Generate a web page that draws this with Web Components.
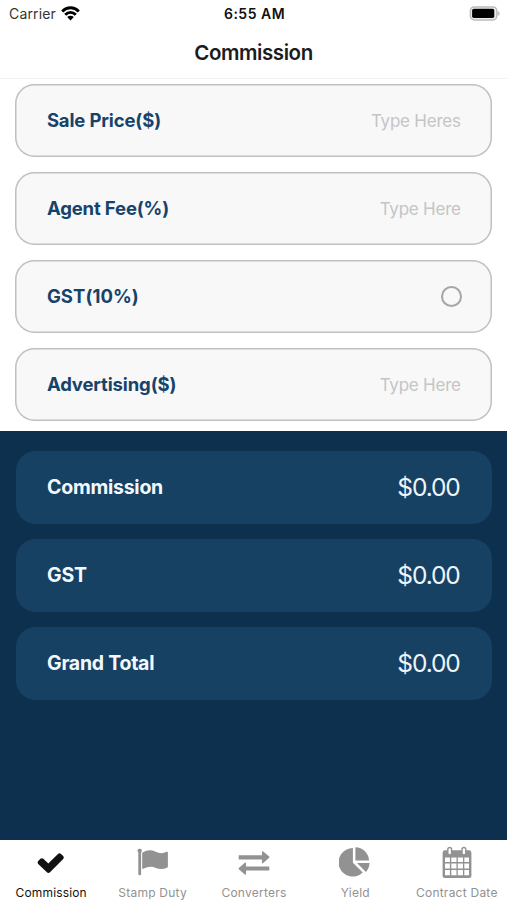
<!DOCTYPE html>
<html lang="en">
<head>
<meta charset="utf-8">
<title>Commission</title>
<style>
html,body{margin:0;height:100%;overflow:hidden;background:#fff}
body{font-family:Inter,"Liberation Sans",sans-serif}
</style>
</head>
<body>
<commission-app></commission-app>
<script>
const define = (name, html) => {
  const template = document.createElement('template');
  template.innerHTML = html;
  customElements.define(name, class extends HTMLElement {
    constructor() {
      super();
      this.attachShadow({mode: 'open'}).append(template.content.cloneNode(true));
    }
  });
};

define('status-bar', `<style>
:host{display:grid;grid-template-columns:1fr auto 1fr;align-items:center;height:27px;padding:0 7px 0 9px;color:#111}
.left{display:flex;align-items:center;gap:5.5px;font-size:14px;letter-spacing:.15px;color:#333}
.time{font-size:14px;font-weight:600;letter-spacing:.5px}
.battery{justify-self:end}
svg{display:block}
</style>
<div class="left"><span>Carrier</span><svg width="19" height="15" viewBox="0 0 19 15"><g fill="none" stroke="#000" stroke-width="2.9"><path d="M1.2 5.4C6 .5 13 .5 17.8 5.4"/><path d="M4.2 8.8C7.3 5.8 11.7 5.8 14.8 8.8"/></g><path d="M6.2 11.1c1.8-1.7 4.8-1.7 6.6 0L9.5 14.4z"/></svg></div>
<div class="time">6:55 AM</div>
<svg class="battery" width="31" height="15" viewBox="0 0 31 15"><rect x="1.4" y=".9" width="26.4" height="13" rx="3.8" fill="#eee" stroke="#bcbcbc" stroke-width="1.5"/><rect x="3.1" y="2.8" width="22.2" height="9.2" rx="1.8"/><path d="M28.6 5c1.6.5 2 1.3 2 2.4s-.4 1.9-2 2.4z" fill="#bcbcbc"/></svg>`);

define('nav-title', `<style>
:host{display:flex;align-items:center;justify-content:center;height:51px;border-bottom:1px solid #f3f3f3;font-size:20.5px;font-weight:600;color:#1c1c1e;letter-spacing:-.42px}
</style><slot></slot>`);

define('form-row', `<style>
:host{display:flex;align-items:center;justify-content:space-between;box-sizing:border-box;height:73px;padding:0 31px 1px 31.5px;border-radius:19.5px;background:#f8f8f8;box-shadow:inset 0 0 0 1.5px #c0c0c0;color:#17436a;font-size:18.5px;font-weight:700;letter-spacing:-.14px}
::slotted([slot=value]){font-size:17px;font-weight:400;color:#c5c5c7;letter-spacing:-.22px;padding:2px .6px 0 0}
</style><slot></slot><slot name="value"></slot>`);

define('radio-ring', `<style>
:host{display:block;box-sizing:border-box;width:21px;height:21px;border:2px solid #a5a5a5;border-radius:50%;margin:1px -1px 0 0}
</style>`);

define('result-row', `<style>
:host{display:flex;align-items:center;justify-content:space-between;box-sizing:border-box;height:73px;padding:0 31.5px;border-radius:19.5px;background:#174163;color:#f4f8fc;font-size:19.5px;font-weight:700;letter-spacing:-.25px}
::slotted([slot=value]){font-size:24.5px;font-weight:400;color:#edf5fc;letter-spacing:-1.1px;padding:0 .8px 1px 0}
</style><slot></slot><slot name="value"></slot>`);

define('tab-item', `<style>
:host{display:flex;flex-direction:column;align-items:center;color:#929292;font-size:12px;line-height:15px;white-space:nowrap;letter-spacing:.24px}
:host([active]){color:#111;letter-spacing:.15px}
.icon{height:32px;margin:6px 0 7px;padding-left:1px;display:block}
.label{padding-left:1px}
::slotted(svg){display:block;fill:currentColor}
</style><div class="icon"><slot name="icon"></slot></div><span class="label"><slot></slot></span>`);

define('tab-bar', `<style>
:host{display:grid;grid-template-columns:repeat(5,1fr);height:60px;background:#fff}
</style><slot></slot>`);

define('commission-app', `<style>
:host{display:flex;flex-direction:column;height:900px;width:507px}
.form{display:flex;flex-direction:column;gap:15px;padding:5px 14.6px 10px 15.4px}
.results{flex:1;display:flex;flex-direction:column;gap:15px;padding:19.5px 15px 0 15.5px;background:#0c304d}
</style>
<status-bar></status-bar>
<nav-title><span>Commission</span></nav-title>
<div class="form">
<form-row><span>Sale Price($)</span><span slot="value">Type Heres</span></form-row>
<form-row><span>Agent Fee(%)</span><span slot="value">Type Here</span></form-row>
<form-row><span style="letter-spacing:.05px">GST(10%)</span><radio-ring slot="value" style="padding:0"></radio-ring></form-row>
<form-row><span>Advertising($)</span><span slot="value">Type Here</span></form-row>
</div>
<div class="results">
<result-row><span>Commission</span><span slot="value">$0.00</span></result-row>
<result-row><span>GST</span><span slot="value">$0.00</span></result-row>
<result-row><span>Grand Total</span><span slot="value">$0.00</span></result-row>
</div>
<tab-bar>
<tab-item active><svg slot="icon" width="32" height="32" viewBox="0 0 32 32"><path d="M3.2 15l2.2-2.2q1.5-1.3 3 0l4.9 4.8 9.7-9.7q1.5-1.3 3 0l2.2 2.2q1.4 1.5 0 3L15 26.3q-1.6 1.4-3.1 0l-8.7-8.4q-1.4-1.5 0-2.9z"/></svg><span>Commission</span></tab-item>
<tab-item><svg slot="icon" width="32" height="32" viewBox="0 0 32 32"><path d="M2.7 2.8a2 2 0 0 1 1.4 3.6v21.8q0 1.1-1.4 1.1t-1.4-1.1V6.4a2 2 0 0 1 1.4-3.6z"/><path d="M5.2 6.7Q12 2.6 18.2 5.6t11.3.2q1.4-.5 1.4.7v14q0 .9-1 1.3-5.4 2.4-11.1.1Q13 19.4 6.2 22.8q-1 .5-1-.7z"/></svg><span>Stamp Duty</span></tab-item>
<tab-item><svg slot="icon" width="32" height="32" viewBox="0 0 32 32"><path d="M.7 9.2H24V5.7q.3-.9 1.2-.3l6 5.2q.5.6 0 1.2l-6 5.2q-1 .6-1.2-.3v-3.3H.7zM31.3 20.4H8v-3.3q-.3-.9-1.2-.3l-6 5.2q-.5.6 0 1.2l6 5.2q1 .6 1.2-.3v-3.5h23.3z"/></svg><span>Converters</span></tab-item>
<tab-item><svg slot="icon" width="32" height="32" viewBox="0 0 32 32"><path d="M13.9 2v14.7l9.9 9.9A14.3 14.3 0 1 1 13.9 2zM16.4 1.2A13.7 13.7 0 0 1 30 14.6H16.4zM18 17.1h12.6a13.7 13.7 0 0 1-3.7 8.9z"/></svg><span>Yield</span></tab-item>
<tab-item><svg slot="icon" width="32" height="33" viewBox="0 0 32 33"><path fill-rule="evenodd" d="M4 4.3H28Q30.4 4.3 30.4 6.7V30Q30.4 32 28.2 32H3.8Q1.6 32 1.6 30V6.7Q1.6 4.3 4 4.3zM4 11.4V16h4.9v-4.6zm6.3 0V16h5.2v-4.6zm6.5 0V16H22v-4.6zm6.5 0V16H28v-4.6zM4 17.4v5.1h4.9v-5.1zm6.3 0v5.1h5.2v-5.1zm6.5 0v5.1H22v-5.1zm6.5 0v5.1H28v-5.1zM4 23.9v5.3h4.9v-5.3zm6.3 0v5.3h5.2v-5.3zm6.5 0v5.3H22v-5.3zm6.5 0v5.3H28v-5.3z"/><g fill="#fff" stroke="currentColor" stroke-width="1.4"><rect x="6.8" y="1.5" width="3.8" height="7.4" rx="1.9"/><rect x="21" y="1.5" width="3.8" height="7.4" rx="1.9"/></g></svg><span>Contract Date</span></tab-item>
</tab-bar>`);
</script>
</body>
</html>
